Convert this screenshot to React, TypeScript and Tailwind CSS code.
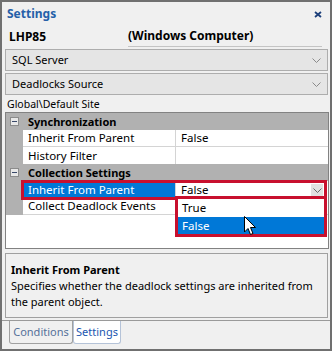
import React from "react";

const Chevron = ({ color = "#7a7a7a" }: { color?: string }) => (
  <svg width="9" height="5" viewBox="0 0 9 5" fill="none">
    <path d="M0.5 0.5 L4.5 4.5 L8.5 0.5" stroke={color} strokeWidth="1" />
  </svg>
);

const Minus = () => (
  <div className="w-[9px] h-[9px] border border-[#8c8c8c] bg-[#e8e8e8] flex items-center justify-center">
    <div className="w-[5px] h-px bg-[#3a4a6a]" />
  </div>
);

const Combo = ({ label }: { label: string }) => (
  <div className="h-[22px] ml-[3px] mr-[2px] border border-[#adadad] bg-[#e5e5e5] flex items-center justify-between pl-[6px] pr-[6px] text-[11px]">
    <span>{label}</span>
    <Chevron color="#8a8a8a" />
  </div>
);

export default function App() {
  return (
    <div
      className="w-[332px] h-[351px] border-2 border-[#707070] bg-[#f0f0f0] flex flex-col text-black overflow-hidden"
      style={{ fontFamily: '"Noto Sans", "Open Sans", sans-serif', fontSize: "11.5px", lineHeight: "16px" }}
    >
      {/* Title */}
      <div className="h-[24px] flex items-center justify-between pl-[5px] pr-[8px]">
        <span className="font-bold text-[12px] text-[#2560a8]">Settings</span>
        <svg width="8" height="7" viewBox="0 0 8 7">
          <path d="M1 1 L7 6 M7 1 L1 6" stroke="#1c3f7a" strokeWidth="1.8" />
        </svg>
      </div>
      {/* Host row */}
      <div className="h-[21px] flex font-bold text-[12px]">
        <div className="w-[126px] pl-[7px] flex items-center">LHP85</div>
        <div className="flex-1 mr-[8px] border-b border-[#c4c4c4] flex items-center">(Windows Computer)</div>
      </div>
      <div className="h-[2px]" />
      <Combo label="SQL Server" />
      <div className="h-[2px]" />
      <Combo label="Deadlocks Source" />
      <div className="h-[17px] pl-[5px] flex items-center text-[10.5px]">Global\Default Site</div>

      {/* Property grid */}
      <div className="relative h-[137px] ml-[3px] mr-[1px] border border-[#828282] bg-white">
        <div className="flex flex-col">
          {/* Synchronization */}
          <div className="h-[17px] bg-[#b1b1b1] flex items-center">
            <div className="w-[17px] flex justify-center"><Minus /></div>
            <span className="pl-[5px] font-bold text-[11px]">Synchronization</span>
          </div>
          <div className="h-[17px] flex">
            <div className="w-[17px] bg-[#b1b1b1]" />
            <div className="w-[152px] border-b border-[#d4d4d4] pl-[5px] flex items-center">Inherit From Parent</div>
            <div className="w-px bg-[#d4d4d4]" />
            <div className="flex-1 border-b border-[#d4d4d4] pl-[5px] flex items-center">False</div>
          </div>
          <div className="h-[17px] flex">
            <div className="w-[17px] bg-[#b1b1b1]" />
            <div className="w-[152px] pl-[5px] flex items-center">History Filter</div>
            <div className="w-px bg-[#d4d4d4]" />
            <div className="flex-1" />
          </div>
          {/* Collection Settings */}
          <div className="h-[17px] bg-[#b1b1b1] flex items-center">
            <div className="w-[17px] flex justify-center"><Minus /></div>
            <span className="pl-[5px] font-bold text-[11px]">Collection Settings</span>
          </div>
          <div className="h-[17px] flex">
            <div className="w-[17px] bg-[#b1b1b1]" />
            <div className="w-[152px] bg-[#0078d7] text-white pl-[5px] flex items-center">Inherit From Parent</div>
            <div className="w-px bg-[#d4d4d4]" />
            <div className="flex-1 pl-[5px] flex items-center justify-between">
              <span>False</span>
            </div>
          </div>
          <div className="h-[17px] flex">
            <div className="w-[17px] bg-[#b1b1b1]" />
            <div className="w-[152px] border-b border-[#d4d4d4] pl-[5px] flex items-center">Collect Deadlock Events</div>
            <div className="w-px bg-[#d4d4d4]" />
            <div className="flex-1 border-b border-[#d4d4d4]" />
          </div>
        </div>

        {/* Red highlight around selected row */}
        <div className="absolute left-[15px] top-[67px] w-[306px] h-[20px] border-[3px] border-[#c8102e] pointer-events-none">
          <div className="absolute right-[1px] top-[1px] w-[12px] h-[12px] bg-[#e1e1e1] flex items-center justify-center">
            <Chevron color="#6a6a6a" />
          </div>
        </div>

        {/* Dropdown list */}
        <div className="absolute left-[169px] top-[83px] w-[152px] h-[41px] border-[3px] border-[#c8102e] bg-white flex flex-col">
          <div className="h-[18px] pl-[4px] flex items-center">True</div>
          <div className="h-[17px] pl-[4px] bg-[#0078d7] text-white flex items-center">False</div>
        </div>

        {/* Cursor */}
        <svg className="absolute left-[238px] top-[103px]" width="13" height="20" viewBox="0 0 13 20">
          <path d="M0.5 0.5 L0.5 16 L4 12.5 L6.5 18.5 L9 17.5 L6.5 11.5 L11.5 11.5 Z" fill="white" stroke="black" strokeWidth="1" strokeLinejoin="round" />
        </svg>
      </div>

      {/* Description */}
      <div className="h-[65px] mt-[4px] ml-[3px] mr-[2px] border border-[#a0a0a0] bg-[#f0f0f0] pl-[5px] pr-[4px] pt-[8px] text-[11px]">
        <div className="font-bold">Inherit From Parent</div>
        <div>Specifies whether the deadlock settings are inherited from the parent object.</div>
      </div>

      {/* Tabs */}
      <div className="mt-[2px] border-t border-[#9a9a9a] flex pl-[7px] text-[11px]">
        <div className="h-[23px] w-[64px] border border-t-0 border-[#a0a0a0] rounded-b-[3px] flex items-center justify-center text-[#56709a]">
          Conditions
        </div>
        <div className="h-[23px] w-[48px] bg-white border border-t-0 border-[#b5c3d8] rounded-b-[3px] flex items-center justify-center text-[#1a56b0]">
          Settings
        </div>
      </div>
    </div>
  );
}
